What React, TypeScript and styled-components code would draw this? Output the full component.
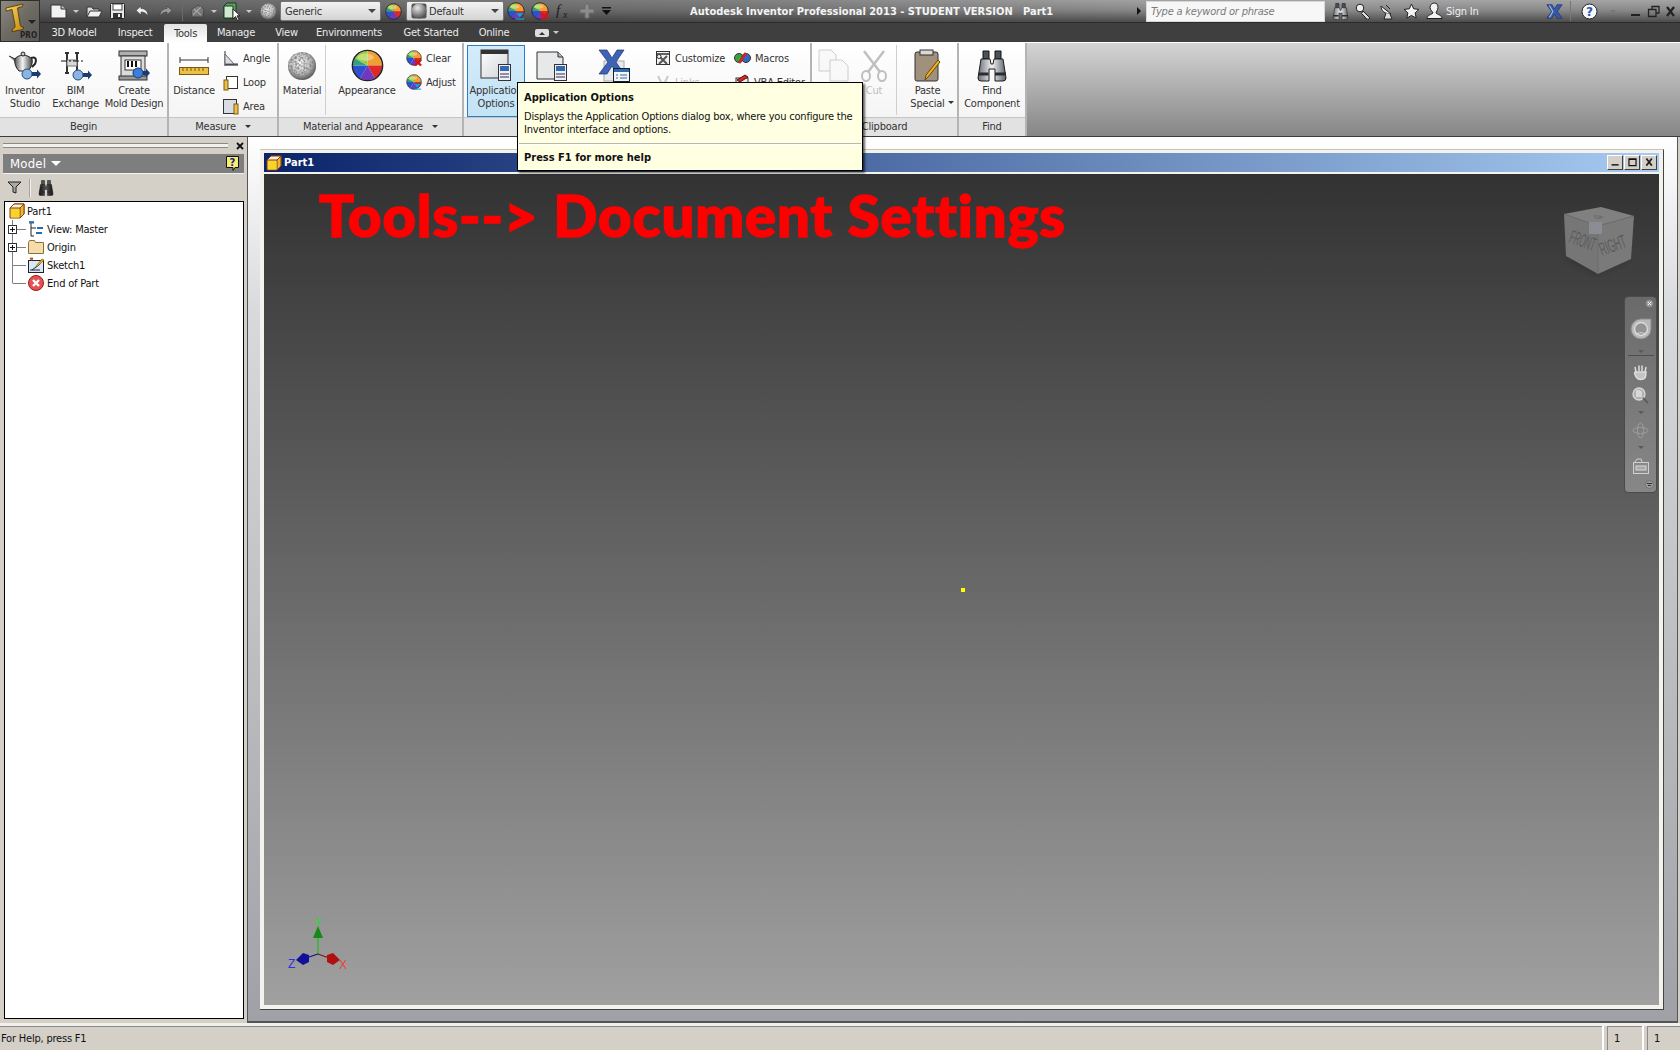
import React from "react";
import styled, { createGlobalStyle } from "styled-components";

const UI = `"DejaVu Sans Condensed", "DejaVu Sans", "Liberation Sans", sans-serif`;

const Global = createGlobalStyle`
  html, body { margin: 0; padding: 0; height: 100%; overflow: hidden; }
  #root { height: 100%; }
  * { box-sizing: border-box; }
  body { font: 11px ${UI}; color: #222; letter-spacing: -0.2px; }
`;

const Root = styled.div`
  position: relative;
  width: 1680px;
  height: 1050px;
  display: flex;
  flex-direction: column;
  background: #d4d0c8;
  overflow: hidden;
`;

/* ---------- header ---------- */
const AppButton = styled.div`
  position: absolute;
  left: 0;
  top: 0;
  width: 40px;
  height: 42px;
  z-index: 2;
  background: linear-gradient(135deg, #8f8b80 0%, #6d6a62 50%, #5a5a5a 100%);
  border: 1px solid #2e2e2e;
`;
const ProText = styled.span`
  position: absolute;
  right: 2px;
  bottom: 1px;
  font-size: 8px;
  font-weight: bold;
  color: #222;
  letter-spacing: 0;
`;
const AppDrop = styled.span`
  position: absolute;
  right: 3px;
  top: 19px;
  width: 0;
  height: 0;
  border-left: 4px solid transparent;
  border-right: 4px solid transparent;
  border-top: 4px solid #222;
`;
const TitleBar = styled.div`
  height: 23px;
  display: flex;
  align-items: center;
  padding-left: 48px;
  background:
    linear-gradient(90deg, rgba(50, 50, 50, 0.55) 0%, rgba(50, 50, 50, 0.35) 40%, rgba(50, 50, 50, 0) 70%),
    linear-gradient(180deg, #a4a4a4 0%, #8a8a8a 45%, #4c4c4c 100%);
  border-bottom: 1px solid #2c2c2c;
`;
const Slot = styled.div<{ $w: number }>`
  width: ${(p) => p.$w}px;
  height: 22px;
  flex: none;
  display: flex;
  align-items: center;
  justify-content: center;
`;
const QatDivider = styled.div`
  width: 1px;
  height: 20px;
  flex: none;
  background: #6a6a6a;
  margin: 0 6px;
`;
const Combo = styled.div<{ $w: number }>`
  width: ${(p) => p.$w}px;
  height: 20px;
  flex: none;
  display: flex;
  align-items: center;
  gap: 2px;
  padding: 0 4px;
  background: linear-gradient(180deg, #f2f2f2 0%, #d4d4d4 100%);
  border: 1px solid #777;
  border-radius: 2px;
  color: #333;
  font-size: 11px;
`;
const ComboArrow = styled.span`
  margin-left: auto;
  width: 0;
  height: 0;
  border-left: 4px solid transparent;
  border-right: 4px solid transparent;
  border-top: 4px solid #444;
`;
const SmallArrow = styled.span<{ $c?: string; $big?: boolean }>`
  display: inline-block;
  width: 0;
  height: 0;
  border-left: ${(p) => (p.$big ? 5 : 3)}px solid transparent;
  border-right: ${(p) => (p.$big ? 5 : 3)}px solid transparent;
  border-top: ${(p) => (p.$big ? 5 : 3)}px solid ${(p) => p.$c || "#c8c8c8"};
`;
const AppTitle = styled.div`
  margin-left: 76px;
  color: #f4f4f4;
  font-weight: bold;
  font-size: 11px;
  letter-spacing: 0;
  white-space: pre;
`;
const RightTools = styled.div`
  margin-left: auto;
  display: flex;
  align-items: center;
`;
const PlayMark = styled.span`
  width: 0;
  height: 0;
  margin-right: 5px;
  border-top: 4px solid transparent;
  border-bottom: 4px solid transparent;
  border-left: 4px solid #111;
`;
const Search = styled.div`
  width: 179px;
  height: 21px;
  flex: none;
  margin-right: 3px;
  padding: 0 4px;
  display: flex;
  align-items: center;
  background: #f7f7f7;
  border: 1px solid #d8d8d8;
  color: #7a7a7a;
  font-style: italic;
  font-size: 11px;
`;
const SignIn = styled.span`
  color: #f0f0f0;
  font-size: 11px;
  width: 100px;
  flex: none;
  padding-left: 1px;
`;
const HelpDivider = styled.div`
  width: 1px;
  height: 20px;
  flex: none;
  background: #777;
  margin: 0 7px 0 6px;
`;
const TabBar = styled.div`
  height: 19px;
  flex: none;
  display: flex;
  align-items: flex-end;
  padding-left: 42px;
  background: #3f3f3f;
`;
const Tab = styled.div<{ $w: number; $active?: boolean }>`
  width: ${(p) => p.$w}px;
  height: ${(p) => (p.$active ? 18 : 19)}px;
  flex: none;
  display: flex;
  align-items: center;
  justify-content: center;
  color: ${(p) => (p.$active ? "#333" : "#ececec")};
  font-size: 11px;
  background: ${(p) => (p.$active ? "linear-gradient(180deg,#e2e2e2,#fff)" : "transparent")};
  border-radius: 2px 2px 0 0;
`;
const TabExtra = styled.div`
  width: 62px;
  height: 19px;
  flex: none;
  display: flex;
  align-items: center;
  justify-content: center;
  gap: 4px;
`;

/* ---------- ribbon ---------- */
const Ribbon = styled.div`
  height: 95px;
  flex: none;
  display: flex;
  background: linear-gradient(180deg, #d4d4d4 0%, #868686 100%);
  border-top: 1px solid #fff;
  border-bottom: 1px solid #3c3c3c;
`;
const Group = styled.div<{ $w: number }>`
  width: ${(p) => p.$w}px;
  flex: none;
  display: flex;
  flex-direction: column;
  background: linear-gradient(180deg, #fff 0%, #f2f2f2 100%);
  border-right: 2px solid #b4b4b4;
`;
const GroupBody = styled.div`
  height: 74px;
  flex: none;
  padding-top: 2px;
  display: flex;
  align-items: flex-start;
`;
const GroupLabel = styled.div`
  flex: 1;
  display: flex;
  align-items: center;
  justify-content: center;
  gap: 9px;
  padding-bottom: 2px;
  background: #e2e2e2;
  border-top: 1px solid #c4c4c4;
  color: #333;
  font-size: 11px;
`;
const BigButton = styled.div<{ $w: number; $ml?: number; $active?: boolean; $off?: boolean }>`
  width: ${(p) => p.$w}px;
  height: 72px;
  flex: none;
  margin-left: ${(p) => p.$ml || 0}px;
  display: flex;
  flex-direction: column;
  align-items: center;
  color: ${(p) => (p.$off ? "#bdbdbd" : "#333")};
  font-size: 11px;
  line-height: 13px;
  text-align: center;
  white-space: nowrap;
  ${(p) =>
    p.$active
      ? "background: linear-gradient(180deg,#d4ecfa,#c2e3f6); box-shadow: inset 0 0 0 1px #2d7fc4;"
      : ""}
`;
const BigIcon = styled.div`
  height: 39px;
  flex: none;
  display: flex;
  align-items: center;
  justify-content: center;
  padding-top: 2px;
`;
const VSep = styled.div<{ $ml?: number }>`
  width: 1px;
  height: 70px;
  flex: none;
  margin-left: ${(p) => p.$ml || 0}px;
  background: #cfcfcf;
`;
const SmallCol = styled.div<{ $w: number; $ml?: number }>`
  width: ${(p) => p.$w}px;
  flex: none;
  margin-left: ${(p) => p.$ml || 0}px;
  padding-top: 1px;
  display: flex;
  flex-direction: column;
`;
const SmallRow = styled.div<{ $off?: boolean }>`
  height: 24px;
  display: flex;
  align-items: center;
  gap: 4px;
  font-size: 11px;
  white-space: nowrap;
  color: ${(p) => (p.$off ? "#bdbdbd" : "#333")};
`;
const SpecialLine = styled.span`
  position: relative;
`;
const PasteArrow = styled.span`
  position: absolute;
  left: 100%;
  top: 4px;
  margin-left: 3px;
  display: flex;
`;

/* ---------- tooltip ---------- */
const Tooltip = styled.div`
  position: absolute;
  left: 517px;
  top: 82px;
  width: 346px;
  height: 89px;
  z-index: 5;
  padding: 8px 6px 0;
  background: #ffffe1;
  border: 1px solid #000;
  box-shadow: 2px 2px 2px rgba(0, 0, 0, 0.6);
  color: #111;
  font-size: 11px;
  line-height: 13px;
  white-space: nowrap;
`;
const TipTitle = styled.div`
  font-weight: bold;
  letter-spacing: 0;
  margin-bottom: 6px;
`;
const TipRule = styled.div`
  height: 2px;
  margin: 7px -5px 6px;
  background: #b8b8b0;
  border-bottom: 1px solid #fff;
`;
const TipFoot = styled.div`
  font-weight: bold;
  letter-spacing: 0;
`;

/* ---------- main ---------- */
const Main = styled.div`
  flex: 1;
  min-height: 0;
  display: flex;
`;
const Browser = styled.div`
  width: 247px;
  flex: none;
  display: flex;
  flex-direction: column;
  padding: 0 3px 4px 4px;
  background: #d4d0c8;
`;
const GripRow = styled.div`
  height: 17px;
  flex: none;
  display: flex;
  align-items: center;
  gap: 8px;
  margin-left: -1px;
`;
const Grip = styled.div`
  flex: 1;
  height: 5px;
  border-top: 1px solid #8a8a86;
  border-bottom: 1px solid #8a8a86;
  background: #f2f0ea;
`;
const ModelHeader = styled.div`
  height: 20px;
  flex: none;
  display: flex;
  align-items: center;
  gap: 5px;
  margin-left: -1px;
  padding: 0 5px 0 7px;
  background: #7e7e7e;
  color: #fff;
  font-size: 13px;
  letter-spacing: 0.2px;
  border-bottom: 1px solid #f2f2f2;
`;
const HelpBubble = styled.div`
  margin-left: auto;
  display: flex;
`;
const BrowserTools = styled.div`
  height: 27px;
  flex: none;
  display: flex;
  align-items: center;
  padding-left: 3px;
  gap: 7px;
`;
const ToolDivider = styled.div`
  width: 2px;
  height: 18px;
  background: #a8a49c;
  border-right: 1px solid #f2f0ea;
`;
const Tree = styled.div`
  flex: 1;
  background: #fff;
  border: 1px solid #000;
`;
const TreeRow = styled.div`
  height: 18px;
  display: flex;
  align-items: center;
  color: #111;
  font-size: 11px;
`;
const RootRow = styled(TreeRow)`
  padding-left: 4px;
  gap: 2px;
`;
const TreeLabel = styled.span`
  margin-left: 3px;
`;
const Workspace = styled.div`
  flex: 1;
  min-width: 0;
  display: flex;
  padding: 12px 13px 11px 12px;
  margin-right: 2px;
  background: linear-gradient(180deg, #ffffff 0%, #d8d9dc 20%, #9fa1a6 100%);
  border-left: 1px solid #555;
  border-right: 1px solid #555;
  border-bottom: 2px solid #555;
`;
const DocWindow = styled.div`
  flex: 1;
  min-width: 0;
  display: flex;
  flex-direction: column;
  padding: 3px 4px 4px 4px;
  background: #f4f2ec;
  border-top: 1px solid #c8c4b8;
  border-bottom: 1px solid #444;
  border-right: 1px solid #444;
`;
const DocTitle = styled.div`
  height: 19px;
  flex: none;
  display: flex;
  align-items: center;
  gap: 2px;
  padding: 0 2px 0 2px;
  background: linear-gradient(90deg, #0a246a 0%, #a6caf0 100%);
  color: #fff;
  font-weight: bold;
  font-size: 11px;
  letter-spacing: 0;
`;
const WinButtons = styled.div`
  margin-left: auto;
  display: flex;
  gap: 1px;
`;
const WinButton = styled.div`
  width: 16px;
  height: 15px;
  display: flex;
  align-items: center;
  justify-content: center;
  background: #d4d0c8;
  border: 1px solid;
  border-color: #fff #404040 #404040 #fff;
`;
const Canvas = styled.div`
  position: relative;
  flex: 1;
  margin-top: 2px;
  background: linear-gradient(180deg, #323232 0%, #a0a0a0 100%);
`;
const Banner = styled.div`
  position: absolute;
  left: 55px;
  top: 7px;
  color: #ff0000;
  font-family: "Lato", "DejaVu Sans", sans-serif;
  font-weight: 900;
  font-size: 58px;
  line-height: 68px;
  white-space: nowrap;
  letter-spacing: 0.9px;
  -webkit-text-stroke: 1.500px #ff0000;
`;
const Pivot = styled.div`
  position: absolute;
  left: 697px;
  top: 414px;
  width: 4px;
  height: 4px;
  background: #ffff00;
`;
const CubePlace = styled.div`
  position: absolute;
  right: 24px;
  top: 32px;
`;
const NavBar = styled.div`
  position: absolute;
  right: 2px;
  top: 122px;
  width: 33px;
  height: 197px;
  display: flex;
  flex-direction: column;
  align-items: center;
  background: linear-gradient(180deg, #6a6a6a 0%, #878787 100%);
  border: 1px solid #4a4a4a;
  border-radius: 4px;
`;
const NavTop = styled.div`
  align-self: flex-end;
  height: 14px;
  padding: 2px 2px 0 0;
`;
const NavSlot = styled.div<{ $h: number }>`
  height: ${(p) => p.$h}px;
  flex: none;
  display: flex;
  align-items: center;
  justify-content: center;
`;
const NavRule = styled.div`
  width: 26px;
  height: 1px;
  flex: none;
  background: #4e4e4e;
  margin-bottom: 2px;
`;
const TriadPlace = styled.div`
  position: absolute;
  left: 22px;
  bottom: 28px;
`;

/* ---------- status ---------- */
const StatusBar = styled.div`
  height: 27px;
  flex: none;
  display: flex;
  align-items: center;
  background: #d4d0c8;
  border-top: 3px solid #f2f0ec;
  box-shadow: inset 0 1px 0 #8a8a86;
  color: #111;
  font-size: 11px;
`;
const StatusText = styled.div`
  flex: 1;
  padding-left: 1px;
`;
const StatusPane = styled.div<{ $w: number }>`
  width: ${(p) => p.$w}px;
  height: 100%;
  flex: none;
  display: flex;
  align-items: center;
  border-left: 2px solid #fff;
  box-shadow: inset 3px 0 0 #d4d0c8, inset 4px 0 0 #8a8a86;
  padding-left: 10px;
`;

/* ---------- icons ---------- */
const Svg = styled.svg`
  display: block;
  flex: none;
`;

const wedge = (cx: number, cy: number, r: number, a: number, b: number) => {
  const p = (d: number) => [cx + r * Math.sin((d * Math.PI) / 180), cy - r * Math.cos((d * Math.PI) / 180)];
  const [x1, y1] = p(a);
  const [x2, y2] = p(b);
  return `M${cx} ${cy}L${x1.toFixed(2)} ${y1.toFixed(2)}A${r} ${r} 0 0 1 ${x2.toFixed(2)} ${y2.toFixed(2)}Z`;
};
const wheelColours: [number, number, string][] = [
  [0, 90, "#f0a030"],
  [90, 150, "#e0282a"],
  [150, 210, "#7038c0"],
  [210, 270, "#2c50d0"],
  [270, 300, "#30a080"],
  [300, 360, "#9ccc3c"],
];
const Wheel = ({ s, badge }: { s: number; badge?: "x" | "down" }) => (
  <Svg width={s} height={s} viewBox="0 0 36 36">
    {wheelColours.map(([a, b, c]) => (
      <path key={a} d={wedge(18, 18, 16, a, b)} fill={c} />
    ))}
    <circle cx="18" cy="18" r="16.5" fill="none" stroke="#222" strokeWidth="1.6" />
    <ellipse cx="16" cy="9" rx="9" ry="4" fill="#fff" opacity="0.35" />
    {badge === "x" && <path d="M20 22l14 13M34 22L20 35" stroke="#d01818" strokeWidth="5" />}
    {badge === "down" && (
      <>
        <path d="M17 22h17l-8.500 9z" fill="#18a0e0" stroke="#0a5f90" strokeWidth="1" />
        <path d="M17 34h17" stroke="#18a0e0" strokeWidth="2.500" />
      </>
    )}
  </Svg>
);
const Ball = ({ s, id }: { s: number; id: string }) => (
  <Svg width={s} height={s} viewBox="0 0 32 32">
    <defs>
      <radialGradient id={id} cx="0.45" cy="0.4" r="0.65">
        <stop offset="0" stopColor="#f8f8f8" />
        <stop offset="0.6" stopColor="#b8b8b8" />
        <stop offset="1" stopColor="#3a3a3a" />
      </radialGradient>
      <filter id={id + "n"}>
        <feTurbulence type="fractalNoise" baseFrequency="0.45" numOctaves="2" seed="4" />
        <feColorMatrix values="0 0 0 0 0.2  0 0 0 0 0.2  0 0 0 0 0.2  2.4 0 0 0 -0.95" />
        <feComposite in2="SourceGraphic" operator="in" />
      </filter>
    </defs>
    <circle cx="16" cy="16" r="15" fill={`url(#${id})`} />
    <circle cx="16" cy="16" r="15" fill="#000" filter={`url(#${id}n)`} />
  </Svg>
);
const SmoothBall = () => (
  <Svg width="16" height="16" viewBox="0 0 16 16">
    <defs>
      <radialGradient id="sb" cx="0.4" cy="0.3" r="0.8">
        <stop offset="0" stopColor="#e8e8e8" />
        <stop offset="1" stopColor="#3c3c3c" />
      </radialGradient>
    </defs>
    <rect x="0.500" y="0.500" width="15" height="15" rx="2" fill="#555" />
    <circle cx="8" cy="8" r="7.500" fill="url(#sb)" />
  </Svg>
);
const NewDoc = () => (
  <Svg width="17" height="16" viewBox="0 0 17 16">
    <path d="M1 2h10l5 4v9H1z" fill="#f2f2f2" stroke="#333" />
    <path d="M11 2v4h5" fill="#bbb" stroke="#333" />
  </Svg>
);
const OpenDoc = () => (
  <Svg width="17" height="15" viewBox="0 0 17 15">
    <path d="M1 13V3h5l1 2h6v2" fill="#ddd" stroke="#333" />
    <path d="M1 13l3-6h12l-3 6z" fill="#f0f0f0" stroke="#333" />
  </Svg>
);
const SaveIcon = () => (
  <Svg width="15" height="16" viewBox="0 0 15 16">
    <rect x="0.500" y="0.500" width="14" height="15" rx="1" fill="#e8e8e8" stroke="#222" />
    <rect x="3" y="1" width="9" height="6" fill="#fff" stroke="#444" />
    <rect x="3" y="10" width="9" height="5" fill="#333" />
    <rect x="8" y="11" width="2" height="3" fill="#eee" />
  </Svg>
);
const Undo = ({ flip, c }: { flip?: boolean; c: string }) => (
  <Svg width="15" height="13" viewBox="0 0 15 13" style={flip ? { transform: "scaleX(-1)" } : undefined}>
    <path d="M6 1L1 5.500 6 10V7c3 0 5 1 7 4 0-5-3-7.500-7-7.500z" fill={c} stroke="#444" strokeWidth="0.700" />
  </Svg>
);
const Return3D = () => (
  <Svg width="17" height="17" viewBox="0 0 17 17" opacity="0.6">
    <path d="M2 7l7-5 6 4-1 8H3z" fill="#8a8a8a" stroke="#3c3c3c" />
    <path d="M4 12l8-8M5 6l7 6" stroke="#d8d8d8" strokeWidth="1.200" />
  </Svg>
);
const CubeCursor = () => (
  <Svg width="19" height="19" viewBox="0 0 19 19">
    <path d="M1 4l3-3h9v12l-3 3H1z" fill="#5ea05e" stroke="#12401a" />
    <path d="M1 4h9v12H1z" fill="#cfe8cf" stroke="#12401a" />
    <path d="M10 7l0 10 2.500-2.500 2 4 1.500-.7-2-4H17z" fill="#fff" stroke="#111" strokeWidth="0.800" />
  </Svg>
);
const Fx = () => (
  <Svg width="18" height="16" viewBox="0 0 18 16">
    <text x="1" y="12" fontFamily="Liberation Serif, serif" fontStyle="italic" fontSize="15" fill="#1c1c1c">
      f
    </text>
    <text x="8" y="15" fontFamily="Liberation Serif, serif" fontStyle="italic" fontSize="10" fill="#1c1c1c">
      x
    </text>
  </Svg>
);
const PlusFaint = () => (
  <Svg width="16" height="16" viewBox="0 0 16 16">
    <path d="M6 1h4v5h5v4h-5v5H6v-5H1V6h5z" fill="#8c8c8c" stroke="#6a6a6a" />
  </Svg>
);
const QatMenu = () => (
  <Svg width="9" height="8" viewBox="0 0 9 8">
    <path d="M0 0h9v1.500H0zM0 3h9L4.500 8z" fill="#111" />
  </Svg>
);
const Binoculars = ({ s, dark }: { s: number; dark?: boolean }) => (
  <Svg width={s} height={s} viewBox="0 0 32 32">
    <defs>
      <linearGradient id={dark ? "bnd" : "bnl"} x1="0" x2="1">
        <stop offset="0" stopColor={dark ? "#111" : "#6a7078"} />
        <stop offset="0.5" stopColor={dark ? "#555" : "#f0f2f4"} />
        <stop offset="1" stopColor={dark ? "#111" : "#5a6068"} />
      </linearGradient>
    </defs>
    <path d="M7 1h6v8H7zM19 1h6v8h-6z" fill="#4a525a" stroke="#111" />
    <path d="M5 9h9l1 5h2l1-5h9l3 19a3 3 0 0 1-3 3h-8v-12h-6v12H5a3 3 0 0 1-3-3z" fill={`url(#${dark ? "bnd" : "bnl"})`} stroke="#1c1c1c" />
    <path d="M2.500 24h10M19 24h11" stroke="#2c2c2c" strokeWidth="3" />
  </Svg>
);
const KeyIcon = () => (
  <Svg width="17" height="17" viewBox="0 0 17 17">
    <circle cx="5" cy="5" r="3.800" fill="#eee" stroke="#222" />
    <path d="M8 8l7 7-2 1.500-1-1-1 .5-1-2-3.500-3.500z" fill="#ddd" stroke="#222" />
  </Svg>
);
const Dish = () => (
  <Svg width="16" height="17" viewBox="0 0 16 17">
    <path d="M2 3c0 5 4 8 10 8z" fill="#f0f0f0" stroke="#222" />
    <path d="M7 2l4 4M7 10l-2 6h8l-2-5" fill="#ddd" stroke="#222" />
  </Svg>
);
const Star = () => (
  <Svg width="17" height="16" viewBox="0 0 17 16">
    <path d="M8.500 1l2.200 4.800 5.300.6-3.900 3.500 1.100 5.200-4.700-2.700-4.700 2.700 1.100-5.200L1 6.400l5.300-.6z" fill="#f4f4f4" stroke="#222" />
  </Svg>
);
const User = () => (
  <Svg width="17" height="18" viewBox="0 0 17 18">
    <path d="M8.500 1c2.500 0 3.500 2 3.500 4.500S10 10 10 11c1 1.500 6 2 6 5.500H1C1 13 6 12.500 7 11c0-1-3-3-3-5.500S6 1 8.500 1z" fill="#f2f2f2" stroke="#1c1c1c" />
  </Svg>
);
const XLogo = ({ s }: { s: number }) => (
  <Svg width={s} height={s} viewBox="0 0 20 20">
    <path d="M1 2h6l3 5 3-5h6l-5.500 8L19 18h-6l-3-5-3 5H1l5.500-8z" fill="#3558a8" stroke="#1a2a60" strokeWidth="0.700" />
    <path d="M4 3l4 7-4 7" fill="none" stroke="#9cb4e0" strokeWidth="1.500" />
  </Svg>
);
const HelpIcon = () => (
  <Svg width="17" height="17" viewBox="0 0 17 17">
    <circle cx="8.500" cy="8.500" r="7.500" fill="#f8f8f8" stroke="#222" />
    <text x="8.500" y="13" textAnchor="middle" fontFamily="DejaVu Sans, sans-serif" fontWeight="bold" fontSize="12" fill="#2a56b4">
      ?
    </text>
  </Svg>
);
const WinCtl = ({ k, s = 14 }: { k: "min" | "rest" | "close" | "max"; s?: number }) => (
  <Svg width={s} height={(s * 13) / 14} viewBox="0 0 14 13">
    {k === "min" && <path d="M2 10h9" stroke="#222" strokeWidth="2" />}
    {k === "rest" && <path d="M5 4V1.500h7V8h-2.500M1.500 4.500h7.500V11.500H1.500z" fill="none" stroke="#222" strokeWidth="1.300" />}
    {k === "max" && <path d="M2.500 2.500h9v8.500h-9zM2.500 3h9" fill="none" stroke="#111" strokeWidth="1.500" />}
    {k === "close" && <path d="M3 2l7 9M10 2l-7 9" stroke="#222" strokeWidth="2.200" />}
  </Svg>
);
const LogoI = () => (
  <Svg width="32" height="36" viewBox="0 0 32 36">
    <defs>
      <linearGradient id="lgi" x1="0" y1="0" x2="1" y2="1">
        <stop offset="0" stopColor="#f8d860" />
        <stop offset="1" stopColor="#c88a10" />
      </linearGradient>
    </defs>
    <path d="M5 7L22 3l-.5 2.500-5 1.500L19 23c.3 2.500 1 3 3.500 3l-.5 2.500-11 2 .5-2.500c2-.5 3-1.500 2.500-4L11 8.500 5 10z" fill="url(#lgi)" stroke="#4a3008" strokeWidth="0.800" />
  </Svg>
);
const Teapot = () => (
  <Svg width="34" height="32" viewBox="0 0 34 32">
    <defs>
      <linearGradient id="tp" x1="0" x2="1">
        <stop offset="0" stopColor="#555" />
        <stop offset="0.45" stopColor="#f4f4f4" />
        <stop offset="1" stopColor="#444" />
      </linearGradient>
    </defs>
    <path d="M1 6l6 3 2 5" fill="#888" stroke="#222" />
    <path d="M23 8c5-2 6 2 4 6l-3 3" fill="none" stroke="#222" strokeWidth="2" />
    <path d="M7 9c3-5 13-5 17 0 1 4-1 9-4 12H11C8 18 6 13 7 9z" fill="url(#tp)" stroke="#222" />
    <circle cx="15" cy="4" r="2" fill="#ccc" stroke="#222" />
    <circle cx="19" cy="24" r="5" fill="#8cb4e0" stroke="#224a80" />
    <path d="M24 22h5v-2.500l4 4.500-4 4.500V26h-5z" fill="#1c3c70" />
  </Svg>
);
const BimIcon = () => (
  <Svg width="34" height="32" viewBox="0 0 34 32">
    <path d="M6 3h4M16 3h4M8 3v20M18 3v20M6 23h4M16 23h4" stroke="#333" strokeWidth="2" fill="none" />
    <path d="M8 10h10v6H8z" fill="#d8d8d8" stroke="#777" />
    <path d="M2 11h24" stroke="#111" strokeDasharray="6 2 2 2" />
    <circle cx="19" cy="25" r="5" fill="#8cb4e0" stroke="#224a80" />
    <path d="M24 23h5v-2.500l4 4.500-4 4.500V27h-5z" fill="#1c3c70" />
  </Svg>
);
const MoldIcon = () => (
  <Svg width="34" height="32" viewBox="0 0 34 32">
    <rect x="2" y="1" width="28" height="5" fill="#b0b0b0" stroke="#333" />
    <rect x="4" y="6" width="24" height="22" fill="#dcdcdc" stroke="#333" />
    <rect x="8" y="10" width="16" height="10" fill="#fff" stroke="#333" />
    <path d="M11 11v6M15 11v6M19 11v6" stroke="#111" strokeWidth="2" />
    <rect x="2" y="26" width="28" height="4" fill="#999" stroke="#333" />
    <circle cx="21" cy="23" r="5" fill="#3a80d8" stroke="#123a80" />
    <path d="M26 21h3v-2.500l4 4.500-4 4.500V25h-3z" fill="#1c3c70" />
  </Svg>
);
const DistanceIcon = () => (
  <Svg width="30" height="22" viewBox="0 0 30 22">
    <path d="M1 2v6M29 2v6M1 5h28" stroke="#333" fill="none" />
    <rect x="0.500" y="12.500" width="29" height="7" fill="#ecc048" stroke="#7a5a10" />
    <path d="M4 13v3M8 13v3M12 13v3M16 13v3M20 13v3M24 13v3" stroke="#7a5a10" />
  </Svg>
);
const AngleIcon = () => (
  <Svg width="16" height="16" viewBox="0 0 16 16">
    <path d="M2 1v13h13" fill="none" stroke="#333" />
    <path d="M2 4l9 10H2z" fill="#d8dde4" stroke="#666" />
    <path d="M1 15h14" stroke="#111" />
  </Svg>
);
const LoopIcon = () => (
  <Svg width="16" height="17" viewBox="0 0 16 17">
    <rect x="3.500" y="2.500" width="11" height="12" fill="#fff" stroke="#333" />
    <rect x="1" y="6" width="4" height="10" fill="#ecc048" stroke="#7a5a10" />
  </Svg>
);
const AreaIcon = () => (
  <Svg width="16" height="17" viewBox="0 0 16 17">
    <rect x="0.500" y="1.500" width="13" height="14" fill="#d8dde4" stroke="#333" />
    <rect x="11" y="6" width="4" height="10" fill="#ecc048" stroke="#7a5a10" />
  </Svg>
);
const WindowIcon = () => (
  <Svg width="32" height="34" viewBox="0 0 32 34">
    <defs>
      <linearGradient id="wi" x1="0" y1="0" x2="1" y2="1">
        <stop offset="0" stopColor="#fff" />
        <stop offset="1" stopColor="#cfd2d6" />
      </linearGradient>
    </defs>
    <rect x="1" y="1" width="27" height="28" fill="url(#wi)" stroke="#333" />
    <rect x="1" y="1" width="27" height="4" fill="#333" />
    <rect x="18.500" y="15.500" width="12" height="16" fill="#eef" stroke="#333" />
    <rect x="20" y="17" width="9" height="5" fill="#3468b0" />
    <path d="M20 25h9M20 28h9" stroke="#333" />
  </Svg>
);
const DocIcon = () => (
  <Svg width="32" height="34" viewBox="0 0 32 34">
    <path d="M1 3h21l5 5v22H1z" fill="#e6e8ea" stroke="#333" />
    <path d="M22 3v5h5" fill="#bbb" stroke="#333" />
    <rect x="18.500" y="15.500" width="12" height="16" fill="#eef" stroke="#333" />
    <rect x="20" y="17" width="9" height="5" fill="#3468b0" />
    <path d="M20 25h9M20 28h9" stroke="#333" />
  </Svg>
);
const ExcelIcon = () => (
  <Svg width="32" height="34" viewBox="0 0 32 34">
    <rect x="6" y="12" width="20" height="20" fill="#e8eaec" stroke="#aaa" />
    <path d="M1 1h8l5 8 5-8h7l-8 12 8 12h-7l-5-8-5 8H1l9-12z" fill="#3e62b4" stroke="#1e3478" strokeWidth="0.700" />
    <rect x="15.500" y="19.500" width="16" height="13" fill="#f4f4f4" stroke="#123" />
    <rect x="16" y="20" width="15" height="3" fill="#3468b0" />
    <path d="M18 26h2M18 29h2M22 26h7M22 29h7" stroke="#3468b0" />
  </Svg>
);
const CustomizeIcon = () => (
  <Svg width="16" height="16" viewBox="0 0 16 16">
    <rect x="1.500" y="1.500" width="13" height="13" fill="#f2f2f2" stroke="#333" />
    <path d="M1.500 4h13" stroke="#333" strokeWidth="1.500" />
    <path d="M4 6l8 8M12 6l-8 8" stroke="#555" strokeWidth="2" />
    <circle cx="4" cy="6.500" r="2" fill="#fff" stroke="#333" />
  </Svg>
);
const LinksIcon = () => (
  <Svg width="16" height="16" viewBox="0 0 16 16" opacity="0.35">
    <path d="M3 2l4 8 2-2M13 2l-4 8M3 14h10" stroke="#777" strokeWidth="2" fill="none" />
  </Svg>
);
const MacrosIcon = () => (
  <Svg width="17" height="14" viewBox="0 0 17 14">
    <circle cx="5" cy="7" r="4.500" fill="#3aa040" stroke="#333" />
    <circle cx="12" cy="7" r="4.500" fill="#3468c0" stroke="#333" />
    <path d="M5 12L12 2" stroke="#c82828" strokeWidth="3" />
  </Svg>
);
const VbaIcon = () => (
  <Svg width="16" height="16" viewBox="0 0 16 16">
    <rect x="2" y="4" width="12" height="11" fill="#eee" stroke="#333" />
    <path d="M3 6l8-5 3 2-8 5z" fill="#d02828" stroke="#601010" />
    <path d="M4 11h8" stroke="#e0a020" strokeWidth="2" />
  </Svg>
);
const CopyIcon = () => (
  <Svg width="32" height="34" viewBox="0 0 32 34" opacity="0.35">
    <path d="M1 1h12l5 5v16H1z" fill="#f2f2f2" stroke="#777" />
    <path d="M12 11h12l6 6v15H12z" fill="#f6f6f6" stroke="#777" />
  </Svg>
);
const CutIcon = () => (
  <Svg width="28" height="32" viewBox="0 0 28 32" opacity="0.4">
    <path d="M4 1l16 21M24 1L8 22" stroke="#666" strokeWidth="2.500" />
    <ellipse cx="6" cy="26" rx="4" ry="5" fill="none" stroke="#666" strokeWidth="2" />
    <ellipse cx="22" cy="26" rx="4" ry="5" fill="none" stroke="#666" strokeWidth="2" />
  </Svg>
);
const PasteIcon = () => (
  <Svg width="30" height="34" viewBox="0 0 30 34">
    <rect x="2" y="3" width="23" height="29" rx="2" fill="#a0907c" stroke="#333" />
    <rect x="7" y="1" width="13" height="5" fill="#d8d8d8" stroke="#333" />
    <path d="M27 13L15 28l-3 3 1-5L25 11z" fill="#f0b020" stroke="#6a4808" />
  </Svg>
);
const FilterIcon = () => (
  <Svg width="15" height="13" viewBox="0 0 15 13">
    <path d="M1 1h13L9 6v6L6 11V6z" fill="#a8a8a8" stroke="#222" />
  </Svg>
);
const HelpTag = () => (
  <Svg width="13" height="15" viewBox="0 0 13 15">
    <path d="M0.500 0.500h12v11H9l-2 3v-3H0.500z" fill="#f6ee70" stroke="#111" />
    <text x="6.500" y="10" textAnchor="middle" fontFamily="DejaVu Sans, sans-serif" fontWeight="bold" fontSize="10" fill="#1a1a90">
      ?
    </text>
  </Svg>
);
const PartIcon = () => (
  <Svg width="16" height="16" viewBox="0 0 16 16">
    <path d="M1 5l4-4h10v10l-4 4H1z" fill="#f2d060" stroke="#8a3a08" />
    <path d="M1 5l4-4h10l-4 4z" fill="#fbf2d0" stroke="#8a3a08" />
    <path d="M11 5v10l4-4V1z" fill="#e8b838" stroke="#8a3a08" />
    <path d="M2 6h8.500v8.500H2z" fill="#f6d428" />
  </Svg>
);
const ViewIcon = () => (
  <Svg width="16" height="16" viewBox="0 0 16 16">
    <path d="M1 1h5M3 1v14M3 7h5M3 15h3" stroke="#222" fill="none" />
    <path d="M1 0.500h5v2H1zM9 6h6v2H9zM8 11h6v2H8z" fill="#2a6ab0" />
  </Svg>
);
const FolderIcon = () => (
  <Svg width="16" height="16" viewBox="0 0 16 16">
    <path d="M0.500 3.500l1-2h5l1 2h8v11H0.500z" fill="#f6dca8" stroke="#8a7040" />
  </Svg>
);
const SketchIcon = () => (
  <Svg width="16" height="16" viewBox="0 0 16 16">
    <rect x="0.500" y="3.500" width="15" height="12" fill="#d8e8f8" stroke="#222" />
    <path d="M2 13h10M4 13l8-6" stroke="#223" />
    <path d="M9 8l5-6 2 1-6 6-2 1z" fill="#f0b020" stroke="#6a4808" strokeWidth="0.600" />
    <path d="M2 1h3L3.500 4z" fill="#e07030" stroke="#802808" strokeWidth="0.600" />
  </Svg>
);
const EndIcon = () => (
  <Svg width="16" height="16" viewBox="0 0 16 16">
    <circle cx="8" cy="8" r="7.500" fill="#e85050" stroke="#902020" />
    <path d="M5 5l6 6M11 5l-6 6" stroke="#fff" strokeWidth="2.400" />
  </Svg>
);
const Gutter = ({ plus, last }: { plus?: boolean; last?: boolean }) => (
  <Svg width="23" height="18" viewBox="0 0 23 18">
    <path d={`M7.500 0V${last ? 9 : 18}M7.500 9.500H21`} stroke="#808080" fill="none" />
    {plus && (
      <>
        <rect x="3.500" y="5.500" width="8" height="8" fill="#fff" stroke="#333" />
        <path d="M5 9.500h5M7.500 7v5" stroke="#111" />
      </>
    )}
  </Svg>
);
const NavClose = () => (
  <Svg width="9" height="9" viewBox="0 0 9 9">
    <circle cx="4.500" cy="4.500" r="4" fill="#9a9a9a" stroke="#555" strokeWidth="0.500" />
    <path d="M2.800 2.800l3.400 3.400M6.200 2.800L2.800 6.200" stroke="#eee" />
  </Svg>
);
const NavWheel = () => (
  <Svg width="22" height="22" viewBox="0 0 22 22">
    <path d="M11 1h10v10a10 10 0 1 1-10-10z" fill="#b8b8b8" stroke="#8c8c8c" />
    <circle cx="11" cy="11" r="6.500" fill="#949494" stroke="#dcdcdc" strokeWidth="1.400" />
    <path d="M6 17c1-3 9-3 10 0" fill="none" stroke="#dcdcdc" />
  </Svg>
);
const NavHand = () => (
  <Svg width="16" height="17" viewBox="0 0 16 17">
    <path d="M3 8L2 3M6 7V1.500M9 7V1.500M12 8l1-5M3 8c-2 0-2 2 1 6 1 2 6 2 8 0 1-2 1-4 1-6z" fill="#c4c4c4" stroke="#dedede" strokeWidth="1.500" />
  </Svg>
);
const NavZoom = () => (
  <Svg width="17" height="17" viewBox="0 0 17 17">
    <circle cx="7" cy="7" r="6" fill="#b0b0b0" stroke="#d8d8d8" strokeWidth="1.300" />
    <path d="M4 3h4l2 2v5H4z" fill="#d8d8d8" />
    <path d="M11 11l5 5" stroke="#5e5e5e" strokeWidth="2" />
  </Svg>
);
const NavOrbit = () => (
  <Svg width="17" height="17" viewBox="0 0 17 17">
    <ellipse cx="8.500" cy="8.500" rx="7.500" ry="3" fill="none" stroke="#9e9e9e" />
    <ellipse cx="8.500" cy="8.500" rx="3" ry="7.500" fill="none" stroke="#9e9e9e" />
  </Svg>
);
const NavLook = () => (
  <Svg width="16" height="16" viewBox="0 0 16 16">
    <rect x="0.500" y="4.500" width="15" height="11" fill="#8a8a8a" stroke="#cfcfcf" />
    <rect x="3" y="8" width="10" height="4" fill="#a8a8a8" stroke="#d8d8d8" />
    <path d="M2 4l2-3h4l1 3" fill="none" stroke="#cfcfcf" />
  </Svg>
);
const NavMenu = () => (
  <Svg width="9" height="9" viewBox="0 0 9 9">
    <circle cx="4.500" cy="4.500" r="4" fill="#9a9a9a" stroke="#555" strokeWidth="0.500" />
    <path d="M2 3.500h5M3 5.500h3" stroke="#333" />
  </Svg>
);
const ViewCube = () => (
  <Svg width="72" height="72" viewBox="0 0 72 72">
    <defs>
      <filter id="cs">
        <feGaussianBlur stdDeviation="3" />
      </filter>
    </defs>
    <path d="M4 52l30 16 32-16-32-8z" fill="#222" opacity="0.45" filter="url(#cs)" />
    <path d="M1 8L38 1l33 9-36 10z" fill="#808080" />
    <path d="M1 8l34 12 0 48L3 50z" fill="#767676" />
    <path d="M35 20l36-10-3 43-33 15z" fill="#7a7a7a" />
    <path d="M1 8l34 12 36-10M35 20v48" fill="none" stroke="#6a6a6a" strokeWidth="0.600" />
    <rect x="26" y="16" width="13" height="12" fill="#8c8c96" />
    <text transform="translate(5 36) rotate(20) scale(0.72 1.700)" fontFamily="Liberation Sans, sans-serif" fontSize="11" fill="#5c5c5c">
      FRONT
    </text>
    <text transform="translate(39 50) rotate(-20) scale(0.82 1.700)" fontFamily="Liberation Sans, sans-serif" fontSize="11" fill="#5c5c5c">
      RIGHT
    </text>
    <text x="30" y="12" transform="rotate(10 30 12)" fontFamily="Liberation Sans, sans-serif" fontSize="5" fill="#5a5a5a">
      TOP
    </text>
  </Svg>
);
const Triad = () => (
  <Svg width="64" height="60" viewBox="0 0 64 60">
    <path d="M32 37V14" stroke="#18c018" strokeWidth="1.200" />
    <path d="M32 9l5 12H27z" fill="#168a16" />
    <path d="M32 37l-12 4" stroke="#0c0c9a" strokeWidth="1.200" />
    <path d="M32 37l11 4" stroke="#8a0c0c" strokeWidth="1.200" />
    <path d="M10 43l7-7 6 2 0 7-6 3z" fill="#101098" />
    <path d="M54 43l-7-7-6 2 0 7 6 3z" fill="#b01010" />
    <text x="32" y="9" textAnchor="middle" fontFamily="Liberation Sans, sans-serif" fontSize="11" fill="#22dd22">
      Y
    </text>
    <text x="2" y="51" fontFamily="Liberation Sans, sans-serif" fontSize="12" fill="#3030e0">
      Z
    </text>
    <text x="53" y="52" fontFamily="Liberation Sans, sans-serif" fontSize="12" fill="#e84040">
      X
    </text>
  </Svg>
);

const NavDrop = ({ h }: { h: number }) => (
  <NavSlot $h={h}>
    <SmallArrow $c="#5a5a5a" />
  </NavSlot>
);

export default function App() {
  return (
    <Root>
      <Global />
      <AppButton>
        <LogoI />
        <AppDrop />
        <ProText>PRO</ProText>
      </AppButton>

      <TitleBar>
        <Slot $w={20}><NewDoc /></Slot>
        <Slot $w={16}><SmallArrow /></Slot>
        <Slot $w={20}><OpenDoc /></Slot>
        <Slot $w={26}><SaveIcon /></Slot>
        <Slot $w={24}><Undo c="#f0f0f0" /></Slot>
        <Slot $w={22}><Undo flip c="#9a9a9a" /></Slot>
        <QatDivider />
        <Slot $w={16}><Return3D /></Slot>
        <Slot $w={17}><SmallArrow /></Slot>
        <Slot $w={20}><CubeCursor /></Slot>
        <Slot $w={14}><SmallArrow /></Slot>
        <Slot $w={24}><Ball s={17} id="qb" /></Slot>
        <Combo $w={101}>Generic<ComboArrow /></Combo>
        <Slot $w={25}><Wheel s={17} /></Slot>
        <Combo $w={98}>
          <SmoothBall />
          Default
          <ComboArrow />
        </Combo>
        <Slot $w={24}><Wheel s={18} badge="down" /></Slot>
        <Slot $w={24}><Wheel s={18} badge="x" /></Slot>
        <Slot $w={24}><Fx /></Slot>
        <Slot $w={22}><PlusFaint /></Slot>
        <Slot $w={16}><QatMenu /></Slot>
        <AppTitle>Autodesk Inventor Professional 2013 - STUDENT VERSION   Part1</AppTitle>
        <RightTools>
          <PlayMark />
          <Search>Type a keyword or phrase</Search>
          <Slot $w={24}><Binoculars s={17} /></Slot>
          <Slot $w={23}><KeyIcon /></Slot>
          <Slot $w={24}><Dish /></Slot>
          <Slot $w={24}><Star /></Slot>
          <Slot $w={22}><User /></Slot>
          <SignIn>Sign In</SignIn>
          <Slot $w={19}><XLogo s={17} /></Slot>
          <HelpDivider />
          <Slot $w={22}><HelpIcon /></Slot>
          <Slot $w={26}><SmallArrow $c="#777" /></Slot>
          <Slot $w={19}><WinCtl k="min" /></Slot>
          <Slot $w={17}><WinCtl k="rest" /></Slot>
          <Slot $w={18}><WinCtl k="close" /></Slot>
        </RightTools>
      </TitleBar>

      <TabBar>
        <Tab $w={64}>3D Model</Tab>
        <Tab $w={58}>Inspect</Tab>
        <Tab $w={43} $active>Tools</Tab>
        <Tab $w={58}>Manage</Tab>
        <Tab $w={43}>View</Tab>
        <Tab $w={82}>Environments</Tab>
        <Tab $w={82}>Get Started</Tab>
        <Tab $w={44}>Online</Tab>
        <TabExtra>
          <Svg width="14" height="8" viewBox="0 0 14 8">
            <rect width="14" height="8" rx="2" fill="#ddd" />
            <path d="M4 6l3-3 3 3z" fill="#333" />
          </Svg>
          <SmallArrow />
        </TabExtra>
      </TabBar>

      <Ribbon>
        <Group $w={169}>
          <GroupBody>
            <BigButton $w={50}><BigIcon><Teapot /></BigIcon>Inventor<br />Studio</BigButton>
            <BigButton $w={51}><BigIcon><BimIcon /></BigIcon>BIM<br />Exchange</BigButton>
            <BigButton $w={66}><BigIcon><MoldIcon /></BigIcon>Create<br />Mold Design</BigButton>
          </GroupBody>
          <GroupLabel>Begin</GroupLabel>
        </Group>
        <Group $w={110}>
          <GroupBody>
            <BigButton $w={50}><BigIcon><DistanceIcon /></BigIcon>Distance</BigButton>
            <SmallCol $w={52} $ml={4}>
              <SmallRow><AngleIcon />Angle</SmallRow>
              <SmallRow><LoopIcon />Loop</SmallRow>
              <SmallRow><AreaIcon />Area</SmallRow>
            </SmallCol>
          </GroupBody>
          <GroupLabel>Measure<SmallArrow $c="#333" /></GroupLabel>
        </Group>
        <Group $w={185}>
          <GroupBody>
            <BigButton $w={46}><BigIcon><Ball s={30} id="mb" /></BigIcon>Material</BigButton>
            <VSep />
            <BigButton $w={78} $ml={2}><BigIcon><Wheel s={33} /></BigIcon>Appearance</BigButton>
            <SmallCol $w={56}>
              <SmallRow><Wheel s={16} badge="x" />Clear</SmallRow>
              <SmallRow><Wheel s={16} badge="down" />Adjust</SmallRow>
            </SmallCol>
          </GroupBody>
          <GroupLabel>Material and Appearance<SmallArrow $c="#333" /></GroupLabel>
        </Group>
        <Group $w={348}>
          <GroupBody>
            <BigButton $w={58} $ml={3} $active><BigIcon><WindowIcon /></BigIcon>Application<br />Options</BigButton>
            <BigButton $w={54}><BigIcon><DocIcon /></BigIcon></BigButton>
            <BigButton $w={70}><BigIcon><ExcelIcon /></BigIcon></BigButton>
            <SmallCol $w={79} $ml={6}>
              <SmallRow><CustomizeIcon />Customize</SmallRow>
              <SmallRow $off><LinksIcon />Links</SmallRow>
            </SmallCol>
            <SmallCol $w={70}>
              <SmallRow><MacrosIcon />Macros</SmallRow>
              <SmallRow><VbaIcon />VBA Editor</SmallRow>
            </SmallCol>
          </GroupBody>
          <GroupLabel />
        </Group>
        <Group $w={147}>
          <GroupBody>
            <BigButton $w={44}><BigIcon><CopyIcon /></BigIcon></BigButton>
            <BigButton $w={36} $off><BigIcon><CutIcon /></BigIcon>Cut</BigButton>
            <VSep $ml={4} />
            <BigButton $w={59} $ml={1}>
              <BigIcon><PasteIcon /></BigIcon>
              Paste
              <SpecialLine>Special<PasteArrow><SmallArrow $c="#333" /></PasteArrow></SpecialLine>
            </BigButton>
          </GroupBody>
          <GroupLabel>Clipboard</GroupLabel>
        </Group>
        <Group $w={68}>
          <GroupBody>
            <BigButton $w={64} $ml={1}><BigIcon><Binoculars s={32} /></BigIcon>Find<br />Component</BigButton>
          </GroupBody>
          <GroupLabel>Find</GroupLabel>
        </Group>
      </Ribbon>

      <Tooltip>
        <TipTitle>Application Options</TipTitle>
        Displays the Application Options dialog box, where you configure the
        <br />
        Inventor interface and options.
        <TipRule />
        <TipFoot>Press F1 for more help</TipFoot>
      </Tooltip>

      <Main>
        <Browser>
          <GripRow>
            <Grip />
            <Svg width="8" height="8" viewBox="0 0 8 8">
              <path d="M1 1l6 6M7 1L1 7" stroke="#111" strokeWidth="1.800" />
            </Svg>
          </GripRow>
          <ModelHeader>
            Model
            <SmallArrow $c="#fff" $big />
            <HelpBubble><HelpTag /></HelpBubble>
          </ModelHeader>
          <BrowserTools>
            <FilterIcon />
            <ToolDivider />
            <Binoculars s={16} dark />
          </BrowserTools>
          <Tree>
            <RootRow><PartIcon />Part1</RootRow>
            <TreeRow><Gutter plus /><ViewIcon /><TreeLabel>View: Master</TreeLabel></TreeRow>
            <TreeRow><Gutter plus /><FolderIcon /><TreeLabel>Origin</TreeLabel></TreeRow>
            <TreeRow><Gutter /><SketchIcon /><TreeLabel>Sketch1</TreeLabel></TreeRow>
            <TreeRow><Gutter last /><EndIcon /><TreeLabel>End of Part</TreeLabel></TreeRow>
          </Tree>
        </Browser>
        <Workspace>
          <DocWindow>
            <DocTitle>
              <PartIcon />
              Part1
              <WinButtons>
                <WinButton><WinCtl k="min" s={11} /></WinButton>
                <WinButton><WinCtl k="max" s={11} /></WinButton>
                <WinButton><WinCtl k="close" s={11} /></WinButton>
              </WinButtons>
            </DocTitle>
            <Canvas>
              <Banner>Tools--&gt; Document Settings</Banner>
              <Pivot />
              <CubePlace><ViewCube /></CubePlace>
              <NavBar>
                <NavTop><NavClose /></NavTop>
                <NavSlot $h={36}><NavWheel /></NavSlot>
                <NavDrop h={8} />
                <NavRule />
                <NavSlot $h={28}><NavHand /></NavSlot>
                <NavSlot $h={18}><NavZoom /></NavSlot>
                <NavDrop h={16} />
                <NavSlot $h={20}><NavOrbit /></NavSlot>
                <NavDrop h={14} />
                <NavSlot $h={24}><NavLook /></NavSlot>
                <NavTop><NavMenu /></NavTop>
              </NavBar>
              <TriadPlace><Triad /></TriadPlace>
            </Canvas>
          </DocWindow>
        </Workspace>
      </Main>

      <StatusBar>
        <StatusText>For Help, press F1</StatusText>
        <StatusPane $w={40}>1</StatusPane>
        <StatusPane $w={38}>1</StatusPane>
      </StatusBar>
    </Root>
  );
}
